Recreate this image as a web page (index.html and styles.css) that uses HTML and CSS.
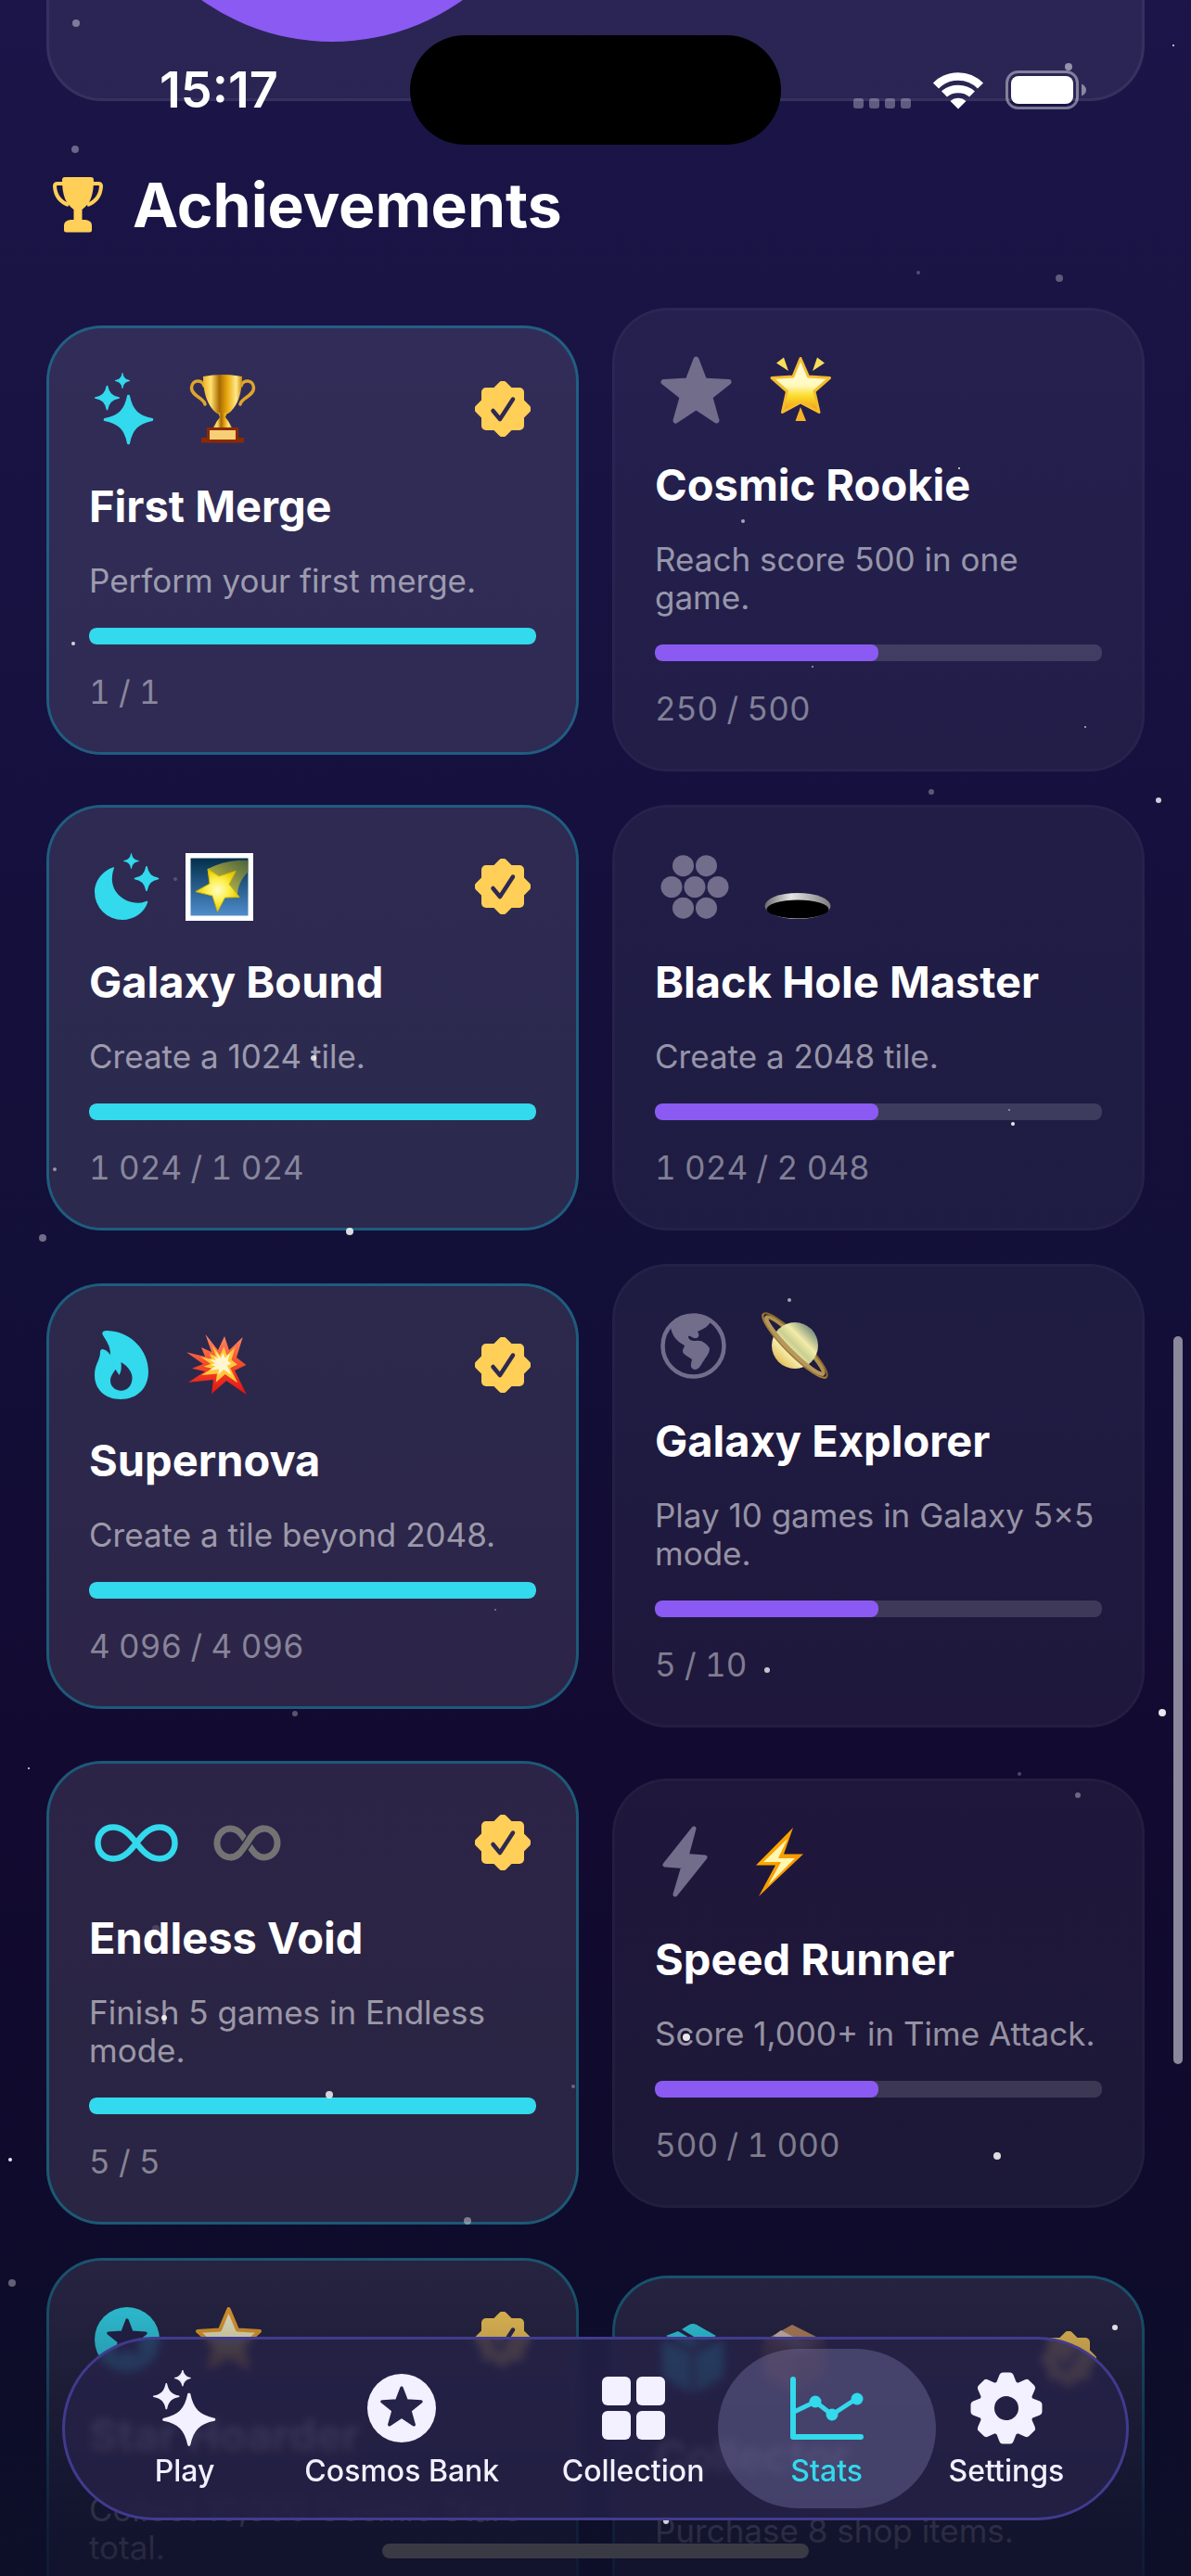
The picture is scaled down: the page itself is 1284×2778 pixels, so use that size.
FILE: index.html
```html
<!DOCTYPE html>
<html lang="en">
<head>
  <meta charset="UTF-8">
  <meta name="viewport" content="width=device-width, initial-scale=1.0">
  <title>Stats</title>
  <link rel="stylesheet" href="styles.css">
</head>
<body>
  <!-- Shared shapes and gradients -->
  <svg class="sprite" aria-hidden="true">
    <defs>
      <linearGradient id="gold" x1="0" x2="1" y1="0" y2="0">
        <stop offset="0" stop-color="#f0b52a"/>
        <stop offset=".2" stop-color="#ffe070"/>
        <stop offset=".42" stop-color="#a86a00"/>
        <stop offset=".62" stop-color="#e9a90f"/>
        <stop offset=".85" stop-color="#ffe98a"/>
        <stop offset="1" stop-color="#c98a08"/>
      </linearGradient>
      <linearGradient id="starGold" x1="0" x2="0" y1="0" y2="1">
        <stop offset="0" stop-color="#fffbe0"/>
        <stop offset=".5" stop-color="#fff9c0"/>
        <stop offset=".7" stop-color="#fbdc2a"/>
        <stop offset="1" stop-color="#f0951a"/>
      </linearGradient>
      <linearGradient id="night" x1="0" x2="0" y1="0" y2="1">
        <stop offset="0" stop-color="#022f4a"/>
        <stop offset="1" stop-color="#4f8ccc"/>
      </linearGradient>
      <linearGradient id="tail" x1="0" x2="1" y1="1" y2="0">
        <stop offset="0" stop-color="#e8d43a"/>
        <stop offset="1" stop-color="#7a8430" stop-opacity=".6"/>
      </linearGradient>
      <radialGradient id="shoot">
        <stop offset="0" stop-color="#fffcc8"/>
        <stop offset=".5" stop-color="#fdf04e"/>
        <stop offset="1" stop-color="#e6c800"/>
      </radialGradient>
      <linearGradient id="rim" x1="0" x2="1" y1="0" y2="0">
        <stop offset="0" stop-color="#6a6a6a"/>
        <stop offset=".4" stop-color="#e6e6e6"/>
        <stop offset="1" stop-color="#7a7a7a"/>
      </linearGradient>
      <linearGradient id="blast" x1="0" x2="0" y1="0" y2="1">
        <stop offset="0" stop-color="#ff8a66"/>
        <stop offset=".45" stop-color="#f4512f"/>
        <stop offset="1" stop-color="#e31010"/>
      </linearGradient>
      <linearGradient id="planet" x1="0" x2="1" y1="1" y2="0">
        <stop offset="0" stop-color="#6f7c52"/>
        <stop offset=".18" stop-color="#e8c868"/>
        <stop offset=".36" stop-color="#f7efb4"/>
        <stop offset=".5" stop-color="#c9cf90"/>
        <stop offset=".64" stop-color="#f2eba8"/>
        <stop offset=".82" stop-color="#8e9f86"/>
        <stop offset="1" stop-color="#3d5a55"/>
      </linearGradient>
      <linearGradient id="spark-fire" x1="0" x2="1" y1="0" y2="1">
        <stop offset="0" stop-color="#ffb300"/>
        <stop offset="1" stop-color="#f58a00"/>
      </linearGradient>
    </defs>
    <symbol id="spark" viewBox="-27 -27 54 54">
      <path d="M0-25.500C3-10 10-3 25.500 0C10 3 3 10 0 25.500C-3 10-10 3-25.500 0C-10-3-3-10 0-25.500Z" fill="currentColor" stroke="currentColor" stroke-width="3" stroke-linejoin="round"/>
    </symbol>
    <symbol id="sparkles" viewBox="0 0 64 78">
      <use href="#spark" x="9.500" y="23.500" width="54" height="54"/>
      <use href="#spark" x="0" y="13.500" width="27" height="27"/>
      <use href="#spark" x="21.500" y="0" width="17" height="17"/>
    </symbol>
    <symbol id="star" viewBox="0 0 77 73">
      <path d="M38.500 3.500L47.300 26.500L73.500 28L53.300 44L60.500 69.500L38.500 55L16.500 69.500L23.700 44L3.500 28L29.700 26.500Z" fill="currentColor" stroke="currentColor" stroke-width="6" stroke-linejoin="round"/>
    </symbol>
    <symbol id="badge" viewBox="-30 -30 60 60">
      <rect x="-23" y="-23" width="46" height="46" rx="5" fill="#ffcf57"/>
      <rect x="-23" y="-23" width="46" height="46" rx="5" fill="#ffcf57" transform="rotate(45)"/>
      <path d="M-10.500 2L-3 11L11-10.500" fill="none" stroke="#2e2951" stroke-width="4.500" stroke-linecap="round" stroke-linejoin="round"/>
    </symbol>
  </svg>

  <div class="app">
    <header class="status-bar">
      <time class="clock">15:17</time>
      <div class="island"></div>
      <div class="indicators">
        <svg class="signal" viewBox="0 0 62 12" width="62" height="12" fill="#ffffff" opacity=".3" aria-hidden="true">
          <rect width="11" height="11" rx="3"/><rect x="17" width="11" height="11" rx="3"/><rect x="34" width="11" height="11" rx="3"/><rect x="51" width="11" height="11" rx="3"/>
        </svg>
        <svg viewBox="0 0 54 40" width="54" height="40" aria-label="Wi-Fi">
          <g fill="none" stroke="#ffffff" stroke-width="8.500">
            <path d="M3 14.500C16 1 38 1 51 14.500"/>
            <path d="M12 23.500C20 16 34 16 42 23.500"/>
          </g>
          <path d="M27 39.500L18.500 31C23 26.500 31 26.500 35.500 31Z" fill="#ffffff"/>
        </svg>
        <svg viewBox="0 0 88 42" width="88" height="42" aria-label="Battery">
          <rect x="1.500" y="1.500" width="76" height="39" rx="12" fill="none" stroke="#ffffff" stroke-opacity=".42" stroke-width="3"/>
          <rect x="6" y="6" width="67" height="30" rx="8" fill="#ffffff"/>
          <path d="M82 14.500Q87 17 87 21T82 27.500Z" fill="#ffffff" opacity=".45"/>
        </svg>
      </div>
    </header>

    <main class="content">
      <section class="chart-card"><div class="chart-disc"></div></section>

      <h1 class="page-title">
        <svg viewBox="0 0 54 60" width="54" height="60" fill="#ffcf57" aria-hidden="true">
          <path d="M10 3Q10 0 13 0H41Q44 0 44 3C44 20 40 29 31.500 35V46H35Q42 47 42 52V57Q42 59.500 39.500 59.500H14.500Q12 59.500 12 57V52Q12 47 19 46H22.500V35C14 29 10 20 10 3Z"/>
          <path d="M11 7H5Q2 7 2 10Q3 25 17 30M43 7H49Q52 7 52 10Q51 25 37 30" fill="none" stroke="#ffcf57" stroke-width="4"/>
        </svg>
        Achievements
      </h1>

      <div class="grid">
        <article class="card unlocked tall">
          <div class="card-top">
            <svg class="icon" width="64" height="78"><use href="#sparkles"/></svg>
            <svg class="emoji" viewBox="0 0 72 74" width="72" height="74">
              <path d="M16 12C14 5 3 5 2.500 14C2 23 16 25 17 32M56 12C58 5 69 5 69.500 14C70 23 56 25 55 32" fill="none" stroke="#dfa52c" stroke-width="3.500" stroke-linecap="round"/>
              <path d="M15 2Q36-2 57 2C57 24 50 36 42 42H30C22 36 15 24 15 2Z" fill="url(#gold)"/>
              <path d="M31 41H41L39 46L42 50L46 57H26L30 50L33 46Z" fill="url(#gold)"/>
              <path d="M19 57H53V68H59V73.500H13V68H19Z" fill="#8a2a05"/>
              <rect x="22" y="60" width="28" height="10" fill="#f7cf74"/>
            </svg>
            <svg class="badge" width="60" height="60" role="img" aria-label="Unlocked"><use href="#badge"/></svg>
          </div>
          <h2>First Merge</h2>
          <p class="desc">Perform your first merge.</p>
          <progress value="1" max="1" aria-label="First Merge"></progress>
          <p class="count">1 / 1</p>
        </article>

        <article class="card">
          <div class="card-top">
            <svg class="icon" width="77" height="73"><use href="#star"/></svg>
            <svg class="emoji" viewBox="-3 0 72 72" width="72" height="72">
              <path d="M7 7.500L15 1.500L20 16ZM59 7.500L51 1.500L46 16Z" fill="#f7df5a"/>
              <path d="M33 55L39 70H27.500Z" fill="#f6b428"/>
              <path d="M33 2.500L41.500 22L64.500 23.500L48 38L53 60.500L33 50L13.500 60.500L18.500 38L2 23.500L25 22Z" fill="url(#starGold)" stroke="#f5bd2d" stroke-width="3" stroke-linejoin="round"/>
            </svg>
          </div>
          <h2>Cosmic Rookie</h2>
          <p class="desc">Reach score 500 in one game.</p>
          <progress value="250" max="500" aria-label="Cosmic Rookie"></progress>
          <p class="count">250 / 500</p>
        </article>

        <article class="card unlocked">
          <div class="card-top">
            <svg class="icon" viewBox="0 0 60 72" width="60" height="72">
              <path d="M21 15C10 18 0 29 0 42A30 30 0 0 0 30 72C42 72 54 64 57 53.500C58 51.500 56 51.500 54 52.500C38 58 11 44 21 16Z" fill="currentColor"/>
              <use href="#spark" x="31" y="0" width="17" height="17"/>
              <use href="#spark" x="42.500" y="14" width="27" height="27"/>
            </svg>
            <svg class="emoji" viewBox="0 0 73 73" width="73" height="73">
              <rect width="73" height="73" fill="#ffffff"/>
              <rect x="5.500" y="5.500" width="62" height="62" fill="url(#night)"/>
              <path d="M24 17C38 10 52 7 67.500 8V20C60 28 56 36 56 46L34 42Z" fill="url(#tail)"/>
              <path d="M24 17L36 25L54 19.500L47 33.500L58 47.500L42.500 48L34.500 63L29 46L11 41.500L26 33Z" fill="url(#shoot)" stroke="#d6b800" stroke-width="1"/>
            </svg>
            <svg class="badge" width="60" height="60" role="img" aria-label="Unlocked"><use href="#badge"/></svg>
          </div>
          <h2>Galaxy Bound</h2>
          <p class="desc">Create a 1024 tile.</p>
          <progress value="1024" max="1024" aria-label="Galaxy Bound"></progress>
          <p class="count">1 024 / 1 024</p>
        </article>

        <article class="card">
          <div class="card-top">
            <svg class="icon" viewBox="0 0 74 69" width="74" height="69" fill="currentColor">
              <circle cx="24.500" cy="11.700" r="11.500"/><circle cx="49.500" cy="11.700" r="11.500"/>
              <circle cx="12" cy="34.500" r="11.500"/><circle cx="37" cy="34.500" r="11.500"/><circle cx="62" cy="34.500" r="11.500"/>
              <circle cx="24.500" cy="57.200" r="11.500"/><circle cx="49.500" cy="57.200" r="11.500"/>
            </svg>
            <svg class="emoji" viewBox="0 0 72 72" width="72" height="72">
              <ellipse cx="36" cy="57" rx="35.500" ry="14" fill="url(#rim)"/>
              <ellipse cx="36" cy="60.500" rx="33.500" ry="10" fill="#000000"/>
            </svg>
          </div>
          <h2>Black Hole Master</h2>
          <p class="desc">Create a 2048 tile.</p>
          <progress value="1024" max="2048" aria-label="Black Hole Master"></progress>
          <p class="count">1 024 / 2 048</p>
        </article>

        <article class="card unlocked">
          <div class="card-top">
            <svg class="icon" viewBox="0 0 58 74" width="58" height="74">
              <path fill="currentColor" fill-rule="evenodd" d="M9 5C7 1 10 0 14 0C40 1 58 22 58 44C58 62 46 74 28 74C11 74 0 63 0 48C0 36 6 32 6 23C6 18 12 19 17 26C17 16 13 12 9 5ZM28.500 34C37 39 41 46 40.500 52C40 60 35 64.700 28.600 64.700C22 64.700 17 60 17 54C17 49 20 46 22.500 41.700L26.500 48C29 44 29 39 28.500 34Z"/>
            </svg>
            <svg class="emoji" viewBox="-3 -3 72 72" width="72" height="72">
              <path d="M20.500 0L34 17L41 2L46 17L60.700 3L54 25L64.400 33L52 39L64.800 65L43 50L27 64.300L29 49L2 51.700L20 40L6 36.700L18 32L0 19.300L20 24L16 14L27 19Z" fill="url(#blast)"/>
              <path d="M20.500 0L34 17L41 2L46 17L60.700 3L54 25L64.400 33L52 39L64.800 65L43 50L27 64.300L29 49L2 51.700L20 40L6 36.700L18 32L0 19.300L20 24L16 14L27 19Z" fill="#ffc93a" transform="translate(15 12) scale(.62)"/>
              <path d="M20.500 0L34 17L41 2L46 17L60.700 3L54 25L64.400 33L52 39L64.800 65L43 50L27 64.300L29 49L2 51.700L20 40L6 36.700L18 32L0 19.300L20 24L16 14L27 19Z" fill="#fff6d0" transform="translate(24 19) scale(.38)"/>
            </svg>
            <svg class="badge" width="60" height="60" role="img" aria-label="Unlocked"><use href="#badge"/></svg>
          </div>
          <h2>Supernova</h2>
          <p class="desc">Create a tile beyond 2048.</p>
          <progress value="4096" max="4096" aria-label="Supernova"></progress>
          <p class="count">4 096 / 4 096</p>
        </article>

        <article class="card">
          <div class="card-top">
            <svg class="icon" viewBox="0 0 71 71" width="71" height="71">
              <circle cx="35.500" cy="35.500" r="33" fill="none" stroke="currentColor" stroke-width="4.500"/>
              <path fill="currentColor" d="M11 15C18 5 30 1 36 1C46 1 52 6 54 10C50 16 45 18 40 20C43 24 41 28 36 27C33 26 32 24 30 25C30 30 36 30 38 30C46 29 50 34 53 38C53 44 49 47 47 51C44 55 42 61 37 61C31 60 33 55 34 50C31 47 24 45 24 41C24 38 26 37 26 35C18 31 12 24 11 15Z"/>
            </svg>
            <svg class="emoji" viewBox="0 0 72 72" width="72" height="72">
              <g transform="translate(36 36) rotate(45)" fill="none">
                <ellipse rx="48" ry="10" stroke="#8a6a2c" stroke-width="2"/>
                <ellipse rx="43" ry="7" stroke="#b08f4a" stroke-width="4"/>
              </g>
              <circle cx="36" cy="36" r="25" fill="url(#planet)"/>
              <g transform="translate(36 36) rotate(45)" fill="none">
                <path d="M-48 0A48 10 0 0 0 48 0" stroke="#9c7c3a" stroke-width="2"/>
                <path d="M-43 0A43 7 0 0 0 43 0" stroke="#b8975a" stroke-width="4"/>
              </g>
            </svg>
          </div>
          <h2>Galaxy Explorer</h2>
          <p class="desc">Play 10 games in Galaxy 5×5 mode.</p>
          <progress value="5" max="10" aria-label="Galaxy Explorer"></progress>
          <p class="count">5 / 10</p>
        </article>

        <article class="card unlocked">
          <div class="card-top">
            <svg class="icon" viewBox="0 0 90 41" width="90" height="41">
              <path d="M45 20.500C37 10 30 3.500 20 3.500C10 3.500 3.500 11 3.500 20.500C3.500 30 10 37.500 20 37.500C30 37.500 37 31 45 20.500C53 10 60 3.500 70 3.500C80 3.500 86.500 11 86.500 20.500C86.500 30 80 37.500 70 37.500C60 37.500 53 31 45 20.500Z" fill="none" stroke="currentColor" stroke-width="6.500"/>
            </svg>
            <svg class="emoji" viewBox="0 0 73 39" width="73" height="39" fill="none" stroke="#737373" stroke-width="7">
              <path d="M36.500 19.500C30 9 26 4 18.500 4C10 4 4 11 4 19.500C4 28 10 35 18.500 35C26 35 30 29 36.500 19.500C43 9 47 4 54.500 4C63 4 69 11 69 19.500C69 28 63 35 54.500 35C47 35 43 29 36.500 19.500Z"/>
              <path d="M29.500 30L43.500 9" stroke="#2b2545" stroke-width="10"/>
              <path d="M18.500 35C26 35 30 29 36.500 19.500C43 9 47 4 54.500 4"/>
            </svg>
            <svg class="badge" width="60" height="60" role="img" aria-label="Unlocked"><use href="#badge"/></svg>
          </div>
          <h2>Endless Void</h2>
          <p class="desc">Finish 5 games in Endless mode.</p>
          <progress value="5" max="5" aria-label="Endless Void"></progress>
          <p class="count">5 / 5</p>
        </article>

        <article class="card tall">
          <div class="card-top">
            <svg class="icon" viewBox="-2 0 53 77" width="53" height="77">
              <path d="M34 3L3 42L23 43.500L14 74L46 34L26 32.500Z" fill="currentColor" stroke="currentColor" stroke-width="5" stroke-linejoin="round"/>
            </svg>
            <svg class="emoji" viewBox="-12 0 72 74" width="72" height="74">
              <path d="M40 0L30 28.500H51L3 74L21 40.500H0Z" fill="url(#spark-fire)"/>
              <path d="M34 12L24 33H42L13 62L27 37H8Z" fill="#fff7b0"/>
            </svg>
          </div>
          <h2>Speed Runner</h2>
          <p class="desc">Score 1,000+ in Time Attack.</p>
          <progress value="500" max="1000" aria-label="Speed Runner"></progress>
          <p class="count">500 / 1 000</p>
        </article>

        <article class="card unlocked">
          <div class="card-top">
            <svg class="icon" viewBox="0 0 70 70" width="70" height="70">
              <circle cx="35" cy="35" r="35" fill="currentColor"/>
              <use href="#star" class="cutout" x="13" y="12" width="44" height="42"/>
            </svg>
            <svg class="emoji" viewBox="0 0 73 72" width="73" height="72">
              <path d="M36.500 3L46 25.500L70 27L52 43L58 67L36.500 54L15 67L21 43L3 27L27 25.500Z" fill="url(#starGold)" stroke="#f3a62b" stroke-width="4" stroke-linejoin="round"/>
            </svg>
            <svg class="badge" width="60" height="60" role="img" aria-label="Unlocked"><use href="#badge"/></svg>
          </div>
          <h2>Star Hoarder</h2>
          <p class="desc">Collect 10,000 Cosmic Stars total.</p>
          <progress value="1" max="1" aria-label="Star Hoarder"></progress>
          <p class="count">10 000 / 10 000</p>
        </article>

        <article class="card unlocked tall">
          <div class="card-top">
            <svg class="icon" viewBox="0 0 70 77" width="70" height="77" fill="currentColor">
              <path d="M23 7L31 2Q35 0 39 2L60 14L46 21ZM19 9L43 23L35 28L6 14ZM2 19L33 33V76L6 61Q2 58 2 54ZM68 19V54Q68 58 64 61L37 76V33Z"/>
            </svg>
            <svg class="emoji" viewBox="0 0 72 74" width="72" height="74">
              <path d="M34 0L70 18L36 34L2 18Z" fill="#c08a5e"/>
              <path d="M2 18L36 34V74L2 56Z" fill="#a86a3a"/>
              <path d="M70 18L36 34V74L70 56Z" fill="#8a5228"/>
              <path d="M22 6L56 24L48 28L14 12Z" fill="#e0c8b8"/>
            </svg>
            <svg class="badge" width="60" height="60" role="img" aria-label="Unlocked"><use href="#badge"/></svg>
          </div>
          <h2>Collector</h2>
          <p class="desc">Purchase 8 shop items.</p>
          <progress value="8" max="8" aria-label="Collector"></progress>
          <p class="count">8 / 8</p>
        </article>
      </div>
    </main>

    <div class="fade"></div>

    <svg class="stars" viewBox="0 0 1284 2778" preserveAspectRatio="xMidYMin slice" fill="#ffffff" aria-hidden="true">
      <circle cx="82" cy="25" r="4" opacity=".4"/>
      <circle cx="1265" cy="49" r="1" opacity=".9"/>
      <circle cx="1152" cy="72" r="4" opacity=".5"/>
      <circle cx="81" cy="161" r="4" opacity=".35"/>
      <circle cx="990" cy="294" r="2" opacity=".25"/>
      <circle cx="1142" cy="300" r="4" opacity=".3"/>
      <circle cx="79" cy="694" r="2" opacity=".8"/>
      <circle cx="1034" cy="505" r="1" opacity=".9"/>
      <circle cx="801" cy="562" r="2" opacity=".6"/>
      <circle cx="876" cy="719" r="1" opacity=".6"/>
      <circle cx="1170" cy="784" r="1" opacity=".7"/>
      <circle cx="189" cy="948" r="2" opacity=".2"/>
      <circle cx="338" cy="1141" r="3" opacity=".8"/>
      <circle cx="59" cy="1261" r="2" opacity=".5"/>
      <circle cx="377" cy="1328" r="4" opacity=".85"/>
      <circle cx="46" cy="1335" r="4" opacity=".4"/>
      <circle cx="1004" cy="854" r="3" opacity=".3"/>
      <circle cx="1249" cy="863" r="3" opacity=".8"/>
      <circle cx="1088" cy="1197" r="1" opacity=".5"/>
      <circle cx="1092" cy="1212" r="2" opacity=".9"/>
      <circle cx="534" cy="1736" r="1" opacity=".4"/>
      <circle cx="318" cy="1848" r="3" opacity=".3"/>
      <circle cx="851" cy="1402" r="2" opacity=".6"/>
      <circle cx="827" cy="1801" r="3" opacity=".75"/>
      <circle cx="1253" cy="1847" r="4" opacity=".9"/>
      <circle cx="31" cy="1907" r="1" opacity=".9"/>
      <circle cx="168" cy="2080" r="4" opacity=".15"/>
      <circle cx="177" cy="2176" r="3" opacity=".85"/>
      <circle cx="355" cy="2259" r="4" opacity=".8"/>
      <circle cx="618" cy="2250" r="2" opacity=".3"/>
      <circle cx="11" cy="2329" r="2" opacity=".9"/>
      <circle cx="504" cy="2395" r="4" opacity=".4"/>
      <circle cx="1099" cy="1913" r="2" opacity=".25"/>
      <circle cx="1162" cy="1936" r="3" opacity=".35"/>
      <circle cx="740" cy="2197" r="4" opacity=".9"/>
      <circle cx="1075" cy="2325" r="4" opacity=".85"/>
      <circle cx="13" cy="2462" r="4" opacity=".35"/>
      <circle cx="1202" cy="2510" r="3" opacity=".85"/>
      <circle cx="718" cy="2719" r="3" opacity=".8"/>
    </svg>

    <div class="scroll-thumb"></div>

    <nav class="tab-bar">
      <a class="tab" href="#play">
        <svg viewBox="0 0 64 78" width="68" height="84"><use href="#sparkles" width="64" height="78"/></svg>
        <span>Play</span>
      </a>
      <a class="tab" href="#bank">
        <svg viewBox="-5 -5 84 84" width="84" height="84">
          <circle cx="37" cy="37" r="37" fill="currentColor"/>
          <use href="#star" class="cutout" x="14" y="13" width="46" height="44"/>
        </svg>
        <span>Cosmos Bank</span>
      </a>
      <a class="tab" href="#collection">
        <svg viewBox="-8 -8 84 84" width="84" height="84" fill="currentColor">
          <rect width="31" height="31" rx="6"/><rect x="37" width="31" height="31" rx="6"/>
          <rect y="37" width="31" height="31" rx="6"/><rect x="37" y="37" width="31" height="31" rx="6"/>
        </svg>
        <span>Collection</span>
      </a>
      <a class="tab active" href="#stats" aria-current="page">
        <svg viewBox="-3 -8 84 84" width="84" height="84" fill="none" stroke="currentColor" stroke-width="6" stroke-linecap="round" stroke-linejoin="round">
          <path d="M3 3V65H76"/>
          <path d="M4 38L27 27L45 41L71 24" stroke-width="5"/>
          <g fill="currentColor" stroke="none"><circle cx="27" cy="27" r="6.500"/><circle cx="45" cy="41" r="6.500"/><circle cx="72" cy="24" r="6.500"/></g>
        </svg>
        <span>Stats</span>
      </a>
      <a class="tab" href="#settings">
        <svg viewBox="-42 -42 84 84" width="84" height="84" fill="currentColor">
          <path fill-rule="evenodd" d="M30 0A30 30 0 1 1-30 0A30 30 0 1 1 30 0ZM13 0A13 13 0 1 0-13 0A13 13 0 1 0 13 0Z"/>
          <g>
            <path id="tooth" d="M-11-27L-7.500-36Q-6.500-38.500-4-38.500H4Q6.500-38.500 7.500-36L11-27Z"/>
            <use href="#tooth" transform="rotate(45)"/><use href="#tooth" transform="rotate(90)"/><use href="#tooth" transform="rotate(135)"/>
            <use href="#tooth" transform="rotate(180)"/><use href="#tooth" transform="rotate(225)"/><use href="#tooth" transform="rotate(270)"/><use href="#tooth" transform="rotate(315)"/>
          </g>
        </svg>
        <span>Settings</span>
      </a>
    </nav>
    <div class="home-indicator"></div>
  </div>
</body>
</html>
```
FILE: styles.css
```css
* {
  box-sizing: border-box;
}
body {
  margin: 0;
  font-family: Inter, "Liberation Sans", sans-serif;
  color: #ffffff;
  background: #0b0b28;
}
h1, h2, p {
  margin: 0;
}
svg {
  display: block;
  flex: none;
  overflow: visible;
}
.sprite {
  position: absolute;
  width: 0;
  height: 0;
}
.app {
  position: relative;
  height: 100vh;
  overflow: hidden;
  background: linear-gradient(#1b1549 0%, #191444 12%, #15103d 32%, #120f38 50%, #130a31 68%, #0f0b2c 86%, #0a0c29 100%);
}

/* Status bar */
.status-bar {
  position: absolute;
  inset: 0 0 auto;
  z-index: 5;
  display: grid;
  grid-template-columns: 1fr 400px 1fr;
  align-items: center;
  padding-top: 37px;
}
.clock {
  justify-self: center;
  padding-left: 30px;
  font-size: 54px;
  font-weight: 600;
  line-height: 120px;
}
.island {
  height: 118px;
  border-radius: 59px;
  background: #000000;
}
.indicators {
  display: flex;
  align-items: flex-end;
  justify-content: flex-end;
  gap: 24px;
  padding-right: 112px;
}

/* Scrolled content */
.content {
  padding: 0 50px;
}
.chart-card {
  position: relative;
  height: 109px;
  border: 3px solid rgba(255, 255, 255, 0.06);
  border-top: 0;
  border-radius: 0 0 60px 60px;
  background: rgba(255, 255, 255, 0.07);
  overflow: hidden;
}
.chart-disc {
  position: absolute;
  left: 62px;
  bottom: 61px;
  width: 486px;
  height: 486px;
  border-radius: 50%;
  background: #8b5af2;
}
.page-title {
  display: flex;
  align-items: center;
  gap: 32px;
  padding: 67px 7px 66px;
  font-size: 66px;
  font-weight: 700;
  line-height: 90px;
}
.grid {
  display: grid;
  grid-template-columns: 1fr 1fr;
  align-items: center;
  gap: 36px;
}
.card {
  display: flex;
  flex-direction: column;
  gap: 30px;
  padding: 42px 43px 44px;
  border: 3px solid rgba(255, 255, 255, 0.08);
  border-radius: 60px;
  background: rgba(255, 255, 255, 0.055);
  background-clip: padding-box;
}
.card.unlocked {
  border-color: rgba(51, 217, 236, 0.38);
  background-color: rgba(255, 255, 255, 0.11);
}
.card-top {
  display: flex;
  align-items: center;
  gap: 38px;
  height: 86px;
  padding: 0 6px;
}
.tall .card-top {
  height: 90px;
}
.icon {
  color: #716d8b;
}
.unlocked .icon {
  color: #33d9ec;
}
.badge {
  margin-left: auto;
}
.cutout {
  color: #262348;
}
.card h2 {
  font-size: 47px;
  font-weight: 700;
  line-height: 60px;
}
.desc {
  color: rgba(255, 255, 255, 0.54);
  font-size: 35px;
  line-height: 41px;
}
.count {
  color: rgba(255, 255, 255, 0.44);
  font-size: 35px;
  line-height: 42px;
  font-variant-numeric: tabular-nums;
}
progress {
  appearance: none;
  display: block;
  width: 100%;
  height: 18px;
  border: 0;
  border-radius: 8px;
  background: rgba(255, 255, 255, 0.14);
  overflow: hidden;
}
progress::-webkit-progress-bar {
  background: none;
}
progress::-webkit-progress-value {
  border-radius: 8px;
  background: #8b5af2;
}
.unlocked progress::-webkit-progress-value {
  background: #33d9ec;
}

/* Overlays */
.fade {
  position: absolute;
  inset: auto 0 0;
  height: 380px;
  background: linear-gradient(rgba(14, 15, 40, 0), rgba(14, 15, 40, 0.2) 28%, rgba(14, 15, 40, 0.75) 80%, rgba(14, 15, 40, 0.85));
}
.stars {
  position: absolute;
  inset: 0;
  width: 100%;
  height: 100%;
  pointer-events: none;
}
.scroll-thumb {
  position: absolute;
  top: 1441px;
  right: 9px;
  width: 10px;
  height: 785px;
  border-radius: 5px;
  background: #8b889c;
}
.home-indicator {
  position: absolute;
  bottom: 19px;
  left: 50%;
  width: 460px;
  height: 16px;
  margin-left: -230px;
  border-radius: 8px;
  background: #3a3a44;
}

/* Tab bar */
.tab-bar {
  position: absolute;
  inset: auto 67px 60px;
  display: grid;
  grid-template-columns: 238fr 230fr 268fr 149fr 238fr;
  align-items: center;
  height: 198px;
  padding: 0 10px;
  border: 3px solid #413b8e;
  border-radius: 99px;
  background: rgba(37, 34, 73, 0.8);
  backdrop-filter: blur(5px);
}
.tab {
  position: relative;
  display: flex;
  flex-direction: column;
  align-items: center;
  gap: 8px;
  color: #f3f0ff;
  font-size: 32px;
  font-weight: 500;
  line-height: 36px;
  text-decoration: none;
  white-space: nowrap;
}
.tab svg, .tab span {
  position: relative;
}
.tab.active {
  color: #33d9ec;
}
/* Highlight reaches past the neighbours */
.tab.active::before {
  content: "";
  position: absolute;
  inset: -22px -43px;
  border-radius: 86px;
  background: rgba(150, 145, 200, 0.3);
}
```
